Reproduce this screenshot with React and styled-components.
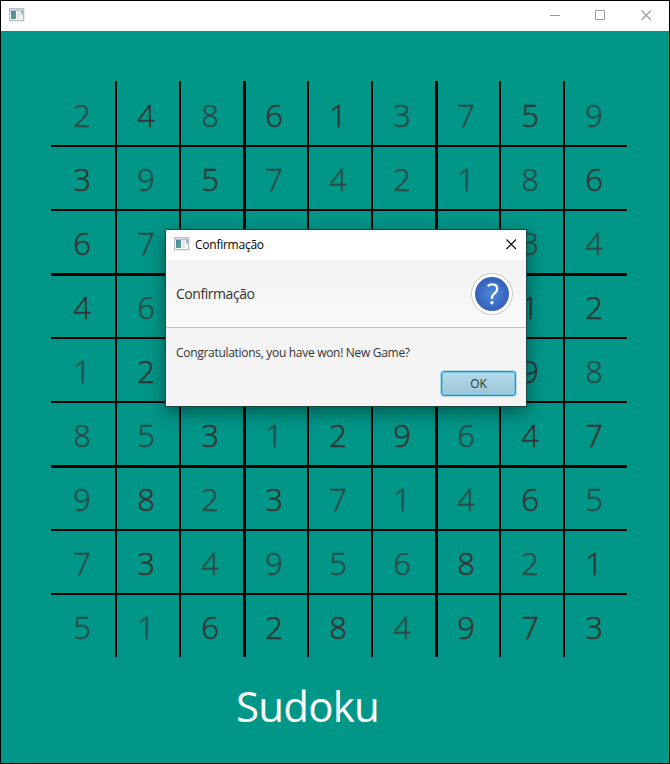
import React from "react";
import styled, { createGlobalStyle } from "styled-components";

const Global = createGlobalStyle`
  * { box-sizing: border-box; }
  body { margin: 0; font-family: "Open Sans", "Noto Sans", sans-serif; }
`;

const Window = styled.div`
  position: relative;
  width: 670px;
  height: 764px;
  border: 1px solid #000;
  background: #009688;
  display: flex;
  flex-direction: column;
  overflow: hidden;
`;

const TitleBar = styled.header`
  height: 30px;
  flex: none;
  background: #fff;
  display: flex;
  align-items: center;
  justify-content: space-between;
  padding: 0 17px 2px 8px;
`;

const Controls = styled.div`
  display: flex;
  gap: 34px;
  color: #999;

  & > :last-child {
    margin-left: 1px;
  }
`;

const Svg = styled.svg`
  display: block;
  flex: none;
`;

const Board = styled.main`
  flex: none;
  display: grid;
  grid-template-columns: repeat(9, 64px);
  grid-auto-rows: 64px;
  margin: 50px 0 0 50px;
`;

const edge = (i) => (i === 0 ? 0 : i % 3 === 0 ? 3 : 2);

const Cell = styled.div`
  display: flex;
  align-items: center;
  justify-content: center;
  padding: 4px 1px 0 0;
  font-size: 32px;
  font-weight: 300;
  line-height: 40px;
  color: ${(p) => (p.$given ? "#333" : "#264c48")};
  -webkit-text-stroke: 0.5px currentColor;
  box-shadow: inset ${(p) => edge(p.$col)}px 0 #000, inset 0 ${(p) => edge(p.$row)}px #000;
`;

const Digit = styled.span`
  display: block;
  transform: scaleX(0.97);
`;

const GameTitle = styled.h1`
  margin: 20px 0 0 235px;
  font-size: 42px;
  line-height: 58px;
  font-weight: 400;
  letter-spacing: -0.75px;
  color: #fff;
`;

const Dialog = styled.section`
  position: absolute;
  left: 164px;
  top: 228px;
  width: 362px;
  height: 178px;
  border: 1px solid #1d4744;
  background: #f4f4f4;
  box-shadow: 0 5px 17px rgba(0, 0, 0, 0.42);
  display: flex;
  flex-direction: column;
`;

const DialogBar = styled.div`
  height: 30px;
  flex: none;
  background: #fff;
  display: flex;
  align-items: center;
  padding: 0 9px 2px 8px;
  color: #000;
`;

const DialogTitle = styled.span`
  flex: 1;
  margin-left: 5px;
  padding-top: 2px;
  font-size: 12px;
  line-height: 16px;
  letter-spacing: -0.25px;
`;

const DialogHeader = styled.div`
  height: 68px;
  flex: none;
  display: flex;
  align-items: center;
  justify-content: space-between;
  padding: 0 13px 0 10px;
  border-bottom: 1px solid #c4c4c4;
  background: linear-gradient(#f2f2f2, #fafafa);
  color: #333;
  font-size: 14px;
  letter-spacing: -0.45px;
`;

const Message = styled.p`
  margin: 16px 10px 0;
  font-size: 12px;
  line-height: 18px;
  letter-spacing: -0.3px;
  color: #333;
`;

const Actions = styled.div`
  display: flex;
  justify-content: flex-end;
  padding: 9px 10px 0 0;
`;

const OkButton = styled.button`
  width: 75px;
  height: 25px;
  padding: 0;
  border: 1px solid #0d9ad2;
  border-radius: 3px;
  background: linear-gradient(#b4daeb, #9bc5d9);
  box-shadow: 0 0 0 1px #b9dfed, inset 0 0 0 1px #7cc3df;
  font: 12px/20px "Open Sans", sans-serif;
  letter-spacing: -0.2px;
  color: #333;
`;

const AppIcon = () => (
  <Svg width="16" height="14" viewBox="0 0 16 14" shapeRendering="crispEdges">
    <defs>
      <linearGradient id="pane" x1="0" y1="0" x2="1" y2="1">
        <stop offset="0" stopColor="#4a7fa8" />
        <stop offset="1" stopColor="#5bab82" />
      </linearGradient>
    </defs>
    <path d="M0 0h15v13H0z" fill="#b9bec4" />
    <path d="M1 1h13v1H1z" fill="#d5dae4" />
    <path d="M1 3h13v9H1z" fill="#f6f6f6" />
    <path d="M2 3h5v8H2z" fill="url(#pane)" />
    <path d="M8 3h3v8H8z" fill="#e5e5e5" />
    <path d="M12 3h2v2h-2z" fill="#8eb0d4" />
    <path d="M12 5h2v2h-2z" fill="#a9d3b4" />
    <path d="M15 1h1v13H1v-1h14z" fill="#ececec" />
  </Svg>
);

const Minimize = () => (
  <Svg width="11" height="11" viewBox="0 0 11 11">
    <path d="M0 5.5h10" stroke="currentColor" />
  </Svg>
);

const Maximize = () => (
  <Svg width="11" height="11" viewBox="0 0 11 11">
    <path d="M.5 .5h9v9h-9z" fill="none" stroke="currentColor" />
  </Svg>
);

const Close = () => (
  <Svg width="11" height="11" viewBox="0 0 11 11">
    <path d="M.5 .5l9.5 9.5M10 .5l-9.5 9.5" stroke="currentColor" strokeWidth="1.1" />
  </Svg>
);

const QuestionIcon = () => (
  <Svg width="42" height="42" viewBox="0 0 42 42">
    <defs>
      <radialGradient id="ball">
        <stop offset="0" stopColor="#4c8ade" />
        <stop offset="1" stopColor="#355fb9" />
      </radialGradient>
    </defs>
    <circle cx="21" cy="21" r="20.5" fill="#fff" stroke="#c8c8c8" />
    <circle cx="21" cy="21" r="17" fill="url(#ball)" />
    <path
      d="M16.6 13.1c1.2-1.1 2.7-1.7 4.5-1.7 3.2 0 5.1 1.6 5.1 4.3 0 2-.9 3.3-2.7 4.7-1.9 1.5-2.6 2.5-2.6 4.6v1"
      fill="none"
      stroke="#fff"
      strokeWidth="2.3"
    />
    <circle cx="20.9" cy="29.8" r="1.7" fill="#fff" />
  </Svg>
);

// Each row: its digits, and a mask with 1 for every given clue.
const ROWS = [
  ["248613759", "010110010"],
  ["395742186", "101000001"],
  ["67     34", "100000000"],
  ["46     12", "100000011"],
  ["12     98", "010000010"],
  ["853129647", "001011011"],
  ["982371465", "010100010"],
  ["734956821", "010000101"],
  ["516284973", "001110111"],
];

export default function App() {
  return (
    <>
      <Global />
      <Window>
        <TitleBar>
          <AppIcon />
          <Controls>
            <Minimize />
            <Maximize />
            <Close />
          </Controls>
        </TitleBar>
        <Board>
          {ROWS.map(([digits, given], r) =>
            [...digits].map((digit, c) => (
              <Cell key={`${r}-${c}`} $row={r} $col={c} $given={given[c] === "1"}>
                <Digit>{digit.trim()}</Digit>
              </Cell>
            ))
          )}
        </Board>
        <GameTitle>Sudoku</GameTitle>
        <Dialog role="dialog">
          <DialogBar>
            <AppIcon />
            <DialogTitle>Confirmação</DialogTitle>
            <Close />
          </DialogBar>
          <DialogHeader>
            <span>Confirmação</span>
            <QuestionIcon />
          </DialogHeader>
          <Message>Congratulations, you have won! New Game?</Message>
          <Actions>
            <OkButton>OK</OkButton>
          </Actions>
        </Dialog>
      </Window>
    </>
  );
}
